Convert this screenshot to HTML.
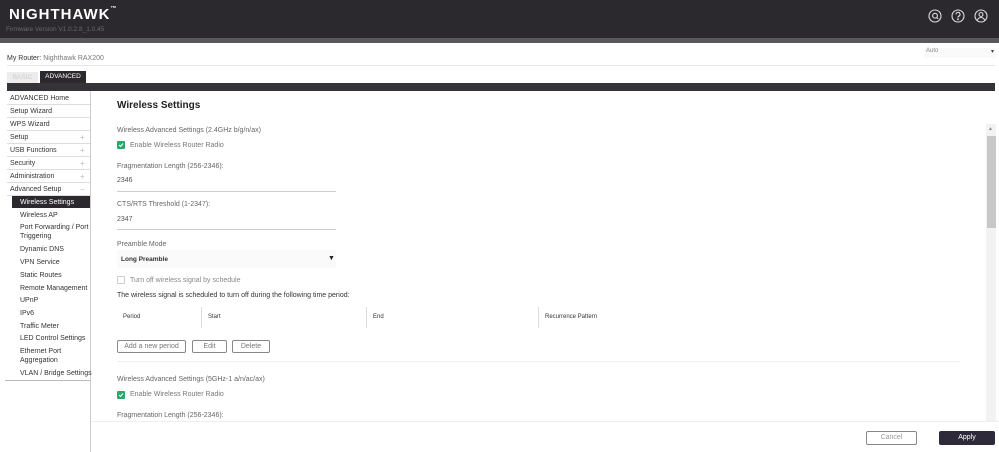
<!DOCTYPE html>
<html><head><style>
*{margin:0;padding:0;box-sizing:border-box}
body{width:999px;height:452px;overflow:hidden;background:#fff;font-family:"Liberation Sans",sans-serif;color:#333;position:relative}
.a{position:absolute;white-space:nowrap}
.s{font-size:7px}
.nav div{position:absolute;left:10px;font-size:7px;color:#333}
.nav .ln{left:7px;width:83px;height:1px;background:#ddd}
.pl{position:absolute;left:80px;font-size:8px;color:#bbb}
.cb{position:absolute;width:8px;height:8px;border-radius:1px}
.btn{position:absolute;border:1px solid #888;border-radius:2px;font-size:7px;color:#777;text-align:center;line-height:11px;height:13px}
</style></head><body>
<div class="a" style="left:0;top:0;width:999px;height:38px;background:#2b282e"></div>
<div class="a" style="left:0;top:38px;width:999px;height:5px;background:#5a585c"></div>
<div class="a" style="left:9px;top:6px;font-size:15px;font-weight:bold;color:#fff;letter-spacing:1px">NIGHTHAWK<span style="font-size:6px;vertical-align:top">&#8482;</span></div>
<div class="a" style="left:6px;top:26px;font-size:6.5px;color:#6a6870">Firmware Version V1.0.2.8_1.0.45</div>
<svg class="a" style="left:928px;top:9px" width="66" height="14" viewBox="0 0 66 14" fill="none" stroke="#ddd" stroke-width="1.1">
<circle cx="7" cy="7" r="6"/><circle cx="7" cy="6.7" r="2.4"/><path d="M8.7 8.5l1.5 1.5"/>
<circle cx="30" cy="7" r="6"/><path d="M28 5.3a2 2 0 1 1 2.5 2c-.5.2-.5.6-.5 1.3"/><circle cx="30" cy="10.2" r=".4" fill="#ddd"/>
<circle cx="53" cy="7" r="6"/><circle cx="53" cy="5.5" r="2"/><path d="M49.2 11.3c1-2 2.3-2.8 3.8-2.8s2.8.8 3.8 2.8"/>
</svg>
<div class="a s" style="left:7px;top:55px">My Router: <span style="color:#777">Nighthawk RAX200</span></div>
<div class="a" style="left:7px;top:65px;width:988px;height:1px;background:#e6e6e6"></div>
<div class="a s" style="left:924px;top:48px;width:72px;height:10px;color:#888;font-size:6px;padding-left:2px;background:#fafafa">Auto<span style="position:absolute;right:2px;color:#444">▾</span></div>
<div class="a s" style="left:7px;top:72px;width:31px;height:11px;background:#ececec;color:#ccc;font-size:6.5px;text-align:center;line-height:11px">BASIC</div>
<div class="a s" style="left:40px;top:71px;width:46px;height:12px;background:#2b282e;color:#fff;font-size:6.5px;text-align:center;line-height:12px">ADVANCED</div>
<div class="a" style="left:7px;top:83px;width:988px;height:8px;background:#353238"></div>
<div class="a" style="left:90px;top:91px;width:1px;height:361px;background:#ccc"></div>
<div class="nav">
<div style="top:95px">ADVANCED Home</div><div class="ln" style="top:104px"></div>
<div style="top:108px">Setup Wizard</div><div class="ln" style="top:117px"></div>
<div style="top:121px">WPS Wizard</div><div class="ln" style="top:130px"></div>
<div style="top:134px">Setup</div><span class="pl" style="top:133px">+</span><div class="ln" style="top:143px"></div>
<div style="top:147px">USB Functions</div><span class="pl" style="top:146px">+</span><div class="ln" style="top:156px"></div>
<div style="top:160px">Security</div><span class="pl" style="top:159px">+</span><div class="ln" style="top:169px"></div>
<div style="top:173px">Administration</div><span class="pl" style="top:172px">+</span><div class="ln" style="top:182px"></div>
<div style="top:186px">Advanced Setup</div><span class="pl" style="top:185px">−</span><div class="ln" style="top:195px"></div>
<div style="left:12px;top:196px;width:78px;height:12px;background:#2b282e;color:#fff;padding:2.5px 0 0 8px">Wireless Settings</div>
<div style="left:20px;top:212px">Wireless AP</div>
<div style="left:20px;top:224px;line-height:8.5px">Port Forwarding / Port<br>Triggering</div>
<div style="left:20px;top:246px">Dynamic DNS</div>
<div style="left:20px;top:259px">VPN Service</div>
<div style="left:20px;top:272px">Static Routes</div>
<div style="left:20px;top:285px">Remote Management</div>
<div style="left:20px;top:297px">UPnP</div>
<div style="left:20px;top:310px">IPv6</div>
<div style="left:20px;top:323px">Traffic Meter</div>
<div style="left:20px;top:335px">LED Control Settings</div>
<div style="left:20px;top:348px;line-height:8.5px">Ethernet Port<br>Aggregation</div>
<div style="left:20px;top:370px">VLAN / Bridge Settings</div>
<div class="ln" style="left:5px;top:380px;width:85px;background:#bbb"></div>
</div>
<div class="a" style="left:117px;top:100px;font-size:10px;font-weight:bold;color:#222">Wireless Settings</div>
<div class="a s" style="left:117px;top:127px;color:#666">Wireless Advanced Settings (2.4GHz b/g/n/ax)</div>
<div class="cb" style="left:117px;top:141px;background:#2aa86a"></div><svg class="a" style="left:118px;top:142px" width="6" height="6"><path d="M1 3l1.5 1.5L5 1.5" stroke="#fff" fill="none"/></svg>
<div class="a s" style="left:130px;top:142px;color:#777">Enable Wireless Router Radio</div>
<div class="a s" style="left:117px;top:163px;color:#666">Fragmentation Length (256-2346):</div>
<div class="a s" style="left:117px;top:177px;color:#555">2346</div>
<div class="a" style="left:117px;top:191px;width:219px;height:1px;background:#ccc"></div>
<div class="a s" style="left:117px;top:201px;color:#666">CTS/RTS Threshold (1-2347):</div>
<div class="a s" style="left:117px;top:216px;color:#555">2347</div>
<div class="a" style="left:117px;top:229px;width:219px;height:1px;background:#ccc"></div>
<div class="a s" style="left:117px;top:241px;color:#666">Preamble Mode</div>
<div class="a" style="left:117px;top:250px;width:219px;height:18px;background:#fafafa"></div>
<div class="a s" style="left:121px;top:256px;font-weight:bold;color:#333;font-size:6.5px">Long Preamble</div>
<div class="a s" style="left:328px;top:255px;color:#222">▼</div>
<div class="cb" style="left:117px;top:276px;border:1px solid #ccc"></div>
<div class="a s" style="left:130px;top:277px;color:#888">Turn off wireless signal by schedule</div>
<div class="a s" style="left:117px;top:292px;color:#333">The wireless signal is scheduled to turn off during the following time period:</div>
<div class="a" style="left:201px;top:307px;width:1px;height:21px;background:#ddd"></div>
<div class="a" style="left:366px;top:307px;width:1px;height:21px;background:#ddd"></div>
<div class="a" style="left:538px;top:307px;width:1px;height:21px;background:#ddd"></div>
<div class="a" style="left:123px;top:314px;font-size:6px">Period</div>
<div class="a" style="left:208px;top:314px;font-size:6px">Start</div>
<div class="a" style="left:373px;top:314px;font-size:6px">End</div>
<div class="a" style="left:545px;top:314px;font-size:6px">Recurrence Pattern</div>
<div class="btn" style="left:117px;top:340px;width:69px">Add a new period</div>
<div class="btn" style="left:192px;top:340px;width:35px">Edit</div>
<div class="btn" style="left:232px;top:340px;width:38px">Delete</div>
<div class="a" style="left:117px;top:361px;width:843px;height:1px;background:#eee"></div>
<div class="a s" style="left:117px;top:376px;color:#666">Wireless Advanced Settings (5GHz-1 a/n/ac/ax)</div>
<div class="cb" style="left:117px;top:391px;background:#2aa86a"></div><svg class="a" style="left:118px;top:392px" width="6" height="6"><path d="M1 3l1.5 1.5L5 1.5" stroke="#fff" fill="none"/></svg>
<div class="a s" style="left:130px;top:391px;color:#777">Enable Wireless Router Radio</div>
<div class="a s" style="left:117px;top:412px;color:#666">Fragmentation Length (256-2346):</div>
<div class="a" style="left:91px;top:421px;width:908px;height:31px;background:#fff;border-top:1px solid #eee"></div>
<div class="a" style="left:986px;top:124px;width:10px;height:297px;background:#f2f2f2"></div>
<div class="a" style="left:987px;top:136px;width:9px;height:92px;background:#c8c8c8"></div>
<div class="a" style="left:988px;top:126px;font-size:5px;color:#888">▲</div>
<div class="btn" style="left:866px;top:431px;width:51px;height:14px;line-height:12px;color:#999">Cancel</div>
<div class="a" style="left:939px;top:431px;width:56px;height:14px;background:#2f2a3a;color:#fff;font-size:7px;text-align:center;line-height:14px;border-radius:2px">Apply</div>
</body></html>
